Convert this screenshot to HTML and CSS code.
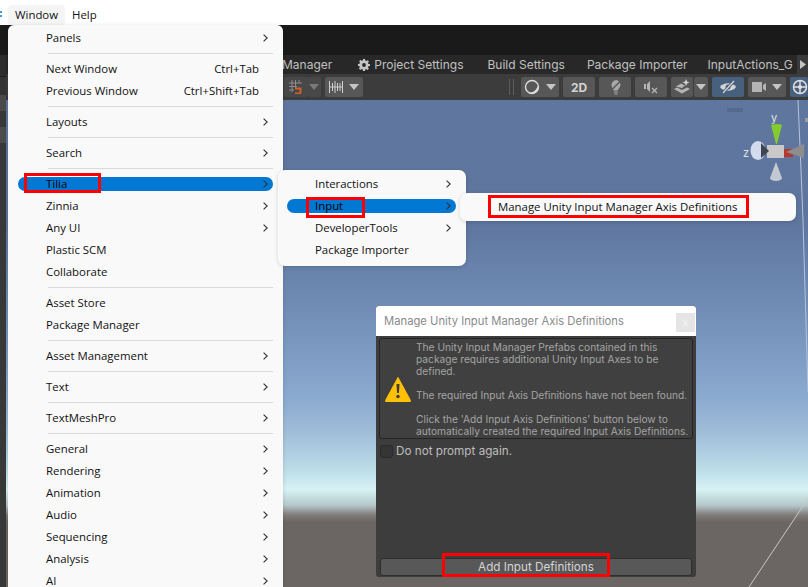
FILE: index.html
```html
<!DOCTYPE html>
<html lang="en">
<head>
  <meta charset="UTF-8">
  <title>Manage Unity Input Manager Axis Definitions</title>
  <link rel="stylesheet" href="styles.css">
</head>
<body>
  <svg class="defs" width="0" height="0">
    <symbol id="chev" viewBox="0 0 5 8"><path d="M.6 .6 4.200 4 .6 7.400" fill="none" stroke="currentColor" stroke-width="1.100"/></symbol>
    <symbol id="caret" viewBox="0 0 10 6"><path d="M0 0h10L5 6z" fill="currentColor"/></symbol>
  </svg>

  <div class="app">
    <div class="menubar">
      <span class="menubar-edge"></span>
      <span class="menubar-item active">Window</span>
      <span class="menubar-item">Help</span>
    </div>

    <div class="editor">
      <div class="sidebar">
        <div class="side-row side-top"></div>
        <div class="side-row side-a"></div>
        <div class="side-row side-b"></div>
        <div class="side-row side-c"></div>
        <div class="side-row side-d"></div>
        <div class="side-row side-c"></div>
      </div>
      <div class="main">
        <div class="titlebar"></div>
        <div class="tabs">
          <span class="tab tab-manager">Manager</span>
          <span class="tab tab-project">
            <svg class="gear" viewBox="0 0 12 12"><path d="M5 0h2l.3 1.600 1.100.5L9.800 1.200l1.100 1.400-.9 1.300.4 1.100L12 5v2l-1.600.3-.4 1.100.9 1.400-1.400 1.300-1.300-.9-1.100.4L7 12H5l-.3-1.600-1.100-.4-1.300.9-1.400-1.300.9-1.400-.4-1.100L0 7V5l1.600-.3.4-1.100-.9-1.300 1.400-1.400 1.400.9 1.100-.5z" fill="#c4c4c4"/><circle cx="6" cy="6" r="1.900" fill="#282828"/></svg>
            Project Settings
          </span>
          <span class="tab tab-build">Build Settings</span>
          <span class="tab tab-package">Package Importer</span>
          <span class="tab tab-input">InputActions_G</span>
          <span class="tab-more"><svg width="6" height="9" viewBox="0 0 6 9"><path d="M0 0l6 4.500L0 9z" fill="#c4c4c4"/></svg></span>
        </div>

        <div class="toolbar">
          <div class="tool tool-snap">
            <svg width="14" height="14" viewBox="0 0 14 14"><path d="M3 0v12M6.500 0v8M10 0v3M0 3h13M0 6.500h8M0 10h5" stroke="#8c8c8c" fill="none"/><path d="M6 8.500h5.500v3.500a1.500 1.500 0 0 1-1.500 1.500H6" stroke="#d2602a" stroke-width="2" fill="none"/></svg>
          </div>
          <div class="tool tool-snap-dd"><svg class="caret dim"><use href="#caret"/></svg></div>
          <div class="tool tool-ruler">
            <svg width="14" height="14" viewBox="0 0 14 14"><path d="M.5 1v12M13.500 1v12M3.500 3v8M6 1v12M8.500 3v8M11 3v8M0 7h14" stroke="#d0d0d0" fill="none"/></svg>
            <svg class="caret"><use href="#caret"/></svg>
          </div>
          <div class="grip"></div>
          <div class="tool tool-shade">
            <svg width="16" height="16" viewBox="0 0 16 16"><circle cx="8" cy="8" r="6.500" fill="none" stroke="#dcdcdc" stroke-width="1.400"/><path d="M4 13.500c4 .5 8-1 9.500-6.500 1.500 4-1.500 8-5.500 8-1.500 0-3-.5-4-1.500z" fill="#dcdcdc"/></svg>
            <svg class="caret"><use href="#caret"/></svg>
          </div>
          <div class="tool tool-2d">2D</div>
          <div class="tool tool-icon">
            <svg width="15" height="16" viewBox="0 0 15 16"><path d="M8.500 1a4.800 4.800 0 0 1 3 7.500L9.500 11.500 5.500 11.500 4.500 9A5 5 0 0 1 8.500 1z" fill="#a8a8a8"/><path d="M6 13h4M6.500 15h3" stroke="#a8a8a8"/><path d="M3 11.500 13 1.500" stroke="#575757" stroke-width="1.400"/></svg>
          </div>
          <div class="tool tool-icon">
            <svg width="16" height="14" viewBox="0 0 16 14"><path d="M1 4h2v5H1zM4 4l3-3v11L4 9z" fill="#b4b4b4"/><path d="M9 8l5 5M14 8l-5 5" stroke="#b4b4b4" stroke-width="1.400"/></svg>
          </div>
          <div class="tool tool-fx">
            <svg width="18" height="16" viewBox="0 0 18 16"><path d="M1 10l3-1.500 5 2.500 5-2.500 3 1.500-8 4.500z" fill="#b4b4b4"/><path d="M3 7.500l5-3 4 2-3 2.500z" fill="#b4b4b4"/><path d="M13 0l1 2.500 2.500 1-2.500 1-1 2.500-1-2.500-2.500-1 2.500-1z" fill="#d0d0d0"/></svg>
          </div>
          <div class="tool tool-fx-dd"><svg class="caret"><use href="#caret"/></svg></div>
          <div class="tool tool-eye">
            <svg width="18" height="14" viewBox="0 0 18 14"><path d="M1 7c3-5 13-5 16 0-3 5-13 5-16 0z" fill="#d4d4d4"/><circle cx="9" cy="7" r="2.500" fill="#46607e"/><path d="M4 13 15 1" stroke="#46607e" stroke-width="3"/><path d="M4 13 15 1" stroke="#d4d4d4" stroke-width="1.200"/></svg>
          </div>
          <div class="tool tool-cam">
            <svg width="14" height="12" viewBox="0 0 14 12"><path d="M0 1h10v10H0zM11 4l3-2v8l-3-2z" fill="#b4b4b4"/></svg>
            <svg class="caret"><use href="#caret"/></svg>
          </div>
          <div class="tool tool-gizmo">
            <svg width="16" height="16" viewBox="0 0 16 16"><circle cx="8" cy="8" r="6.500" fill="none" stroke="#e0e0e0" stroke-width="1.500"/><path d="M1.500 8h13M8 1.500v13" stroke="#e0e0e0" stroke-width="1.500"/><circle cx="8" cy="8" r="2" fill="#e0e0e0"/></svg>
          </div>
        </div>

        <div class="scene"></div>
      </div>
    </div>
  </div>

  <!-- scene overlays -->
  <svg class="scene-lines" viewBox="0 0 808 587">
    <path d="M798 100 801 170 803 220 808 392" fill="none" stroke="#b4c4dc"/>
    <path d="M809 497 749 587" fill="none" stroke="#c8c8c8"/>
    <path d="M727 109h16M727 111h16" stroke="#4d5e7c"/>
    <path d="M805 118h3v4h-3z" fill="#9a9ea6"/>
  </svg>
  <svg class="gizmo" viewBox="0 0 68 90">
    <text x="31" y="22" class="gizmo-label">y</text>
    <text x="3" y="57" class="gizmo-label">z</text>
    <path d="M31 25q6-2 11 0l-5 19h-1z" fill="#84cc2e"/>
    <path d="M27 45h17v13H27z" fill="#c9c9c9"/>
    <ellipse cx="18" cy="50.500" rx="7.500" ry="9.500" fill="#d3dced"/>
    <path d="M21 43l8 8-8 7z" fill="#3e4450"/>
    <path d="M44 49h9v8h-9z" fill="#b5382b"/>
    <path d="M46 52 64 44v14z" fill="#8d8d8d"/>
    <path d="M36 62l6 16a6 3 0 0 1-12 0z" fill="#c3c9d3"/>
  </svg>

  <ul class="menu menu-window">
    <li class="item">Panels<svg class="chev"><use href="#chev"/></svg></li>
    <li class="sep"></li>
    <li class="item">Next Window<span class="key">Ctrl+Tab</span></li>
    <li class="item">Previous Window<span class="key">Ctrl+Shift+Tab</span></li>
    <li class="sep"></li>
    <li class="item">Layouts<svg class="chev"><use href="#chev"/></svg></li>
    <li class="sep"></li>
    <li class="item">Search<svg class="chev"><use href="#chev"/></svg></li>
    <li class="sep"></li>
    <li class="item selected">Tilia<svg class="chev"><use href="#chev"/></svg></li>
    <li class="item">Zinnia<svg class="chev"><use href="#chev"/></svg></li>
    <li class="item">Any UI<svg class="chev"><use href="#chev"/></svg></li>
    <li class="item">Plastic SCM</li>
    <li class="item">Collaborate</li>
    <li class="sep"></li>
    <li class="item">Asset Store</li>
    <li class="item">Package Manager</li>
    <li class="sep"></li>
    <li class="item">Asset Management<svg class="chev"><use href="#chev"/></svg></li>
    <li class="sep"></li>
    <li class="item">Text<svg class="chev"><use href="#chev"/></svg></li>
    <li class="sep"></li>
    <li class="item">TextMeshPro<svg class="chev"><use href="#chev"/></svg></li>
    <li class="sep"></li>
    <li class="item">General<svg class="chev"><use href="#chev"/></svg></li>
    <li class="item">Rendering<svg class="chev"><use href="#chev"/></svg></li>
    <li class="item">Animation<svg class="chev"><use href="#chev"/></svg></li>
    <li class="item">Audio<svg class="chev"><use href="#chev"/></svg></li>
    <li class="item">Sequencing<svg class="chev"><use href="#chev"/></svg></li>
    <li class="item">Analysis<svg class="chev"><use href="#chev"/></svg></li>
    <li class="item">AI<svg class="chev"><use href="#chev"/></svg></li>
  </ul>

  <ul class="menu menu-tilia">
    <li class="item">Interactions<svg class="chev"><use href="#chev"/></svg></li>
    <li class="item selected">Input<svg class="chev"><use href="#chev"/></svg></li>
    <li class="item">DeveloperTools<svg class="chev"><use href="#chev"/></svg></li>
    <li class="item">Package Importer</li>
  </ul>

  <ul class="menu menu-input">
    <li class="item">Manage Unity Input Manager Axis Definitions</li>
  </ul>

  <div class="dialog">
    <div class="dialog-title">
      <span>Manage Unity Input Manager Axis Definitions</span>
      <span class="dialog-close">x</span>
    </div>
    <div class="dialog-body">
      <div class="helpbox">
        <svg class="warn" viewBox="0 0 26 26"><path d="M13 1.500 25.500 24.500a.6.6 0 0 1-.5 1H1a.6.6 0 0 1-.5-1z" fill="#ffc107" stroke="#ffc107" stroke-linejoin="round"/><path d="M11.500 8h3l-.6 9h-1.800z" fill="#3a3a3a"/><circle cx="13" cy="20.500" r="1.700" fill="#3a3a3a"/></svg>
        <p class="helptext">The Unity Input Manager Prefabs contained in this package requires additional Unity Input Axes to be defined.<br><br>The required Input Axis Definitions have not been found.<br><br>Click the 'Add Input Axis Definitions' button below to automatically created the required Input Axis Definitions.</p>
      </div>
      <label class="check"><span class="check-box"></span>Do not prompt again.</label>
      <div class="dialog-button">Add Input Definitions</div>
    </div>
  </div>

  <div class="mark mark-tilia"></div>
  <div class="mark mark-input"></div>
  <div class="mark mark-manage"></div>
  <div class="mark mark-add"></div>
</body>
</html>
```

FILE: styles.css
```css
html, body {
  margin: 0;
  height: 100%;
}
body {
  width: 808px;
  height: 587px;
  overflow: hidden;
  position: relative;
  background: #fff;
  font-family: "Open Sans", "Noto Sans", sans-serif;
  font-size: 11.4px;
  color: #111;
}
.defs {
  position: absolute;
}
.app {
  display: flex;
  flex-direction: column;
  height: 100%;
}

/* menu bar */
.menubar {
  height: 25px;
  display: flex;
  align-items: flex-end;
  box-sizing: border-box;
}
.menubar-edge {
  width: 2px;
  height: 6px;
  margin: 0 6px 8px 0;
  border-top: 2px dotted #3d9be0;
  border-bottom: 2px dotted #3d9be0;
  box-sizing: border-box;
}
.menubar-item {
  height: 20px;
  line-height: 20px;
  padding: 0 7px;
}
.menubar-item.active {
  background: #f5f5f5;
  border-radius: 4px 4px 0 0;
}

/* editor */
.editor {
  flex: 1;
  display: flex;
  min-height: 0;
}
.sidebar {
  width: 8px;
  background: #383838;
}
.side-top { height: 30px; background: #1a1a1a; }
.side-a { height: 22px; background: #2c2c2c; border-bottom: 1px solid #1c1c1c; box-sizing: border-box; }
.side-b { height: 18px; background: #333; }
.side-c { height: 16px; background: #4b4b4b; }
.side-d { height: 16px; background: #383838; }
.main {
  flex: 1;
  display: flex;
  flex-direction: column;
}
.titlebar {
  height: 30px;
  background: #1a1a1a;
}
.tabs {
  height: 19px;
  background: #282828;
  display: flex;
  align-items: center;
  font-family: Inter, sans-serif;
  font-size: 12px;
  color: #c0c0c0;
  overflow: hidden;
}
.tab {
  display: flex;
  align-items: center;
  gap: 4px;
  white-space: nowrap;
  flex: none;
}
.tab-manager { margin-left: 276px; }
.tab-project { margin-left: 26px; }
.tab-build { margin-left: 24px; }
.tab-package { margin-left: 22px; }
.tab-input { margin-left: 20px; }
.tab-more {
  margin-left: auto;
  width: 11px;
  height: 19px;
  flex: none;
  background: #3a3a3a;
  display: flex;
  align-items: center;
  justify-content: center;
}
.gear {
  width: 12px;
  height: 12px;
}
.toolbar {
  height: 26px;
  background: #3c3c3c;
  display: flex;
  align-items: center;
  padding-left: 278px;
}
.tool {
  height: 20px;
  background: #575757;
  border-radius: 2px;
  display: flex;
  align-items: center;
  justify-content: center;
  gap: 6px;
  flex: none;
  box-sizing: border-box;
}
.caret {
  width: 10px;
  height: 6px;
  color: #c4c4c4;
}
.caret.dim {
  color: #7a7a7a;
}
.tool-snap { width: 23px; background: #484848; }
.tool-snap-dd { width: 14px; background: #484848; }
.tool-ruler { width: 38px; margin-left: 4px; }
.grip {
  width: 3px;
  height: 16px;
  margin-left: 146px;
  border-left: 1px solid #5c5c5c;
  border-right: 1px solid #5c5c5c;
}
.tool-shade { width: 38px; margin-left: 7px; }
.tool-2d {
  width: 32px;
  margin-left: 4px;
  font-family: Inter, sans-serif;
  font-size: 12px;
  font-weight: 700;
  color: #d4d4d4;
}
.tool-icon { width: 32px; margin-left: 4px; }
.tool-fx { width: 22px; margin-left: 4px; }
.tool-fx-dd { width: 14px; margin-left: 1px; }
.tool-eye { width: 32px; margin-left: 4px; background: #46607e; }
.tool-cam { width: 38px; margin-left: 4px; }
.tool-gizmo {
  width: 18px;
  margin-left: 4px;
  padding-left: 2px;
  background: #46607e;
  justify-content: flex-start;
}

.scene {
  flex: 1;
  background: linear-gradient(180deg, #5f769e 0, #5e759e 24.6%, #7390b8 45%, #8cabd0 61.6%, #9fbcd8 67.8%, #bcdde8 76%, #d8f2f4 80%, #b5c8cc 83.2%, #807c7a 85.2%, #6b6563 86.7%, #6b6563 100%);
}
.scene-lines {
  position: absolute;
  inset: 0;
  width: 808px;
  height: 587px;
}
.gizmo {
  position: absolute;
  left: 740px;
  top: 100px;
  width: 68px;
  height: 90px;
}
.gizmo-label {
  font: 11px Inter, sans-serif;
  fill: #e4e4e4;
}

/* popup menus */
.menu {
  position: absolute;
  margin: 0;
  padding: 0;
  list-style: none;
  background: #f9f9f9;
  box-shadow: 0 1px 4px rgba(0,0,0,0.15);
  box-sizing: border-box;
}
.item {
  height: 22px;
  box-sizing: border-box;
  padding: 0 24px 2px 38px;
  display: flex;
  justify-content: space-between;
  align-items: center;
  position: relative;
  white-space: nowrap;
  z-index: 0;
}
.chev {
  width: 5px;
  height: 8px;
  margin: 2px -9px 0 0;
  color: #333;
}
.sep {
  height: 1px;
  margin: 4px 10px 4px 40px;
  background: #d9d9d9;
}
.selected {
  color: #000;
}
.selected::before {
  content: "";
  position: absolute;
  left: 10px;
  right: 10px;
  top: 4px;
  height: 14px;
  background: #0078d4;
  border-radius: 7px;
  z-index: -1;
}
.menu-window {
  left: 8px;
  top: 25px;
  width: 275px;
  height: 562px;
  padding-top: 2px;
  border-radius: 6px 6px 0 0;
}
.menu-tilia {
  left: 278px;
  top: 170px;
  width: 188px;
  height: 96px;
  padding-top: 3px;
  border-radius: 7px;
}
.menu-tilia .item {
  padding-left: 37px;
}
.menu-tilia .selected::before {
  left: 9px;
}
.menu-input {
  left: 460px;
  top: 193px;
  width: 336px;
  height: 28px;
  padding-top: 3px;
  border-radius: 7px;
}

/* dialog */
.dialog {
  position: absolute;
  left: 376px;
  top: 306px;
  width: 320px;
  height: 271px;
  background: #3d3d3d;
  border-radius: 3px;
  display: flex;
  flex-direction: column;
  font-family: Inter, sans-serif;
}
.dialog-title {
  height: 30px;
  flex: none;
  background: #fff;
  color: #8a8a8a;
  font-size: 11.25px;
  border-radius: 3px 3px 0 0;
  display: flex;
  align-items: center;
  padding-left: 8px;
  position: relative;
}
.dialog-close {
  position: absolute;
  right: 1px;
  top: 7px;
  width: 19px;
  height: 19px;
  background: #e5e5e5;
  color: #f4f4f4;
  text-align: center;
  line-height: 19px;
  font-size: 10px;
}
.dialog-body {
  flex: 1;
  display: flex;
  flex-direction: column;
  padding: 2px 3px 1px 3px;
}
.helpbox {
  height: 101px;
  box-sizing: border-box;
  border: 1px solid #242424;
  border-radius: 3px;
  display: flex;
  align-items: center;
  padding-left: 5px;
  gap: 5px;
  background: #404040;
}
.warn {
  width: 26px;
  height: 26px;
  flex: none;
}
.helptext {
  margin: 0;
  font-size: 10.2px;
  line-height: 12px;
  color: #a4a4a4;
}
.check {
  display: flex;
  align-items: center;
  gap: 3px;
  height: 16px;
  margin-top: 4px;
  padding-left: 1px;
  font-size: 11.7px;
  color: #bdbdbd;
}
.check-box {
  width: 13px;
  height: 13px;
  border: 1px solid #2a2a2a;
  border-radius: 3px;
  background: #353535;
  box-sizing: border-box;
}
.dialog-button {
  margin: auto 1px 0;
  height: 18px;
  box-sizing: border-box;
  line-height: 16px;
  border: 1px solid #2e2e2e;
  border-radius: 3px;
  background: #585858;
  text-align: center;
  color: #d4d4d4;
  font-size: 11.7px;
}

/* red annotation boxes */
.mark {
  position: absolute;
  border: 3px solid #f00;
  box-sizing: border-box;
}
.mark-tilia { left: 24px; top: 173px; width: 77px; height: 20px; }
.mark-input { left: 306px; top: 197px; width: 59px; height: 21px; }
.mark-manage { left: 488px; top: 195px; width: 261px; height: 23px; }
.mark-add { left: 442px; top: 553px; width: 168px; height: 24px; }
```
